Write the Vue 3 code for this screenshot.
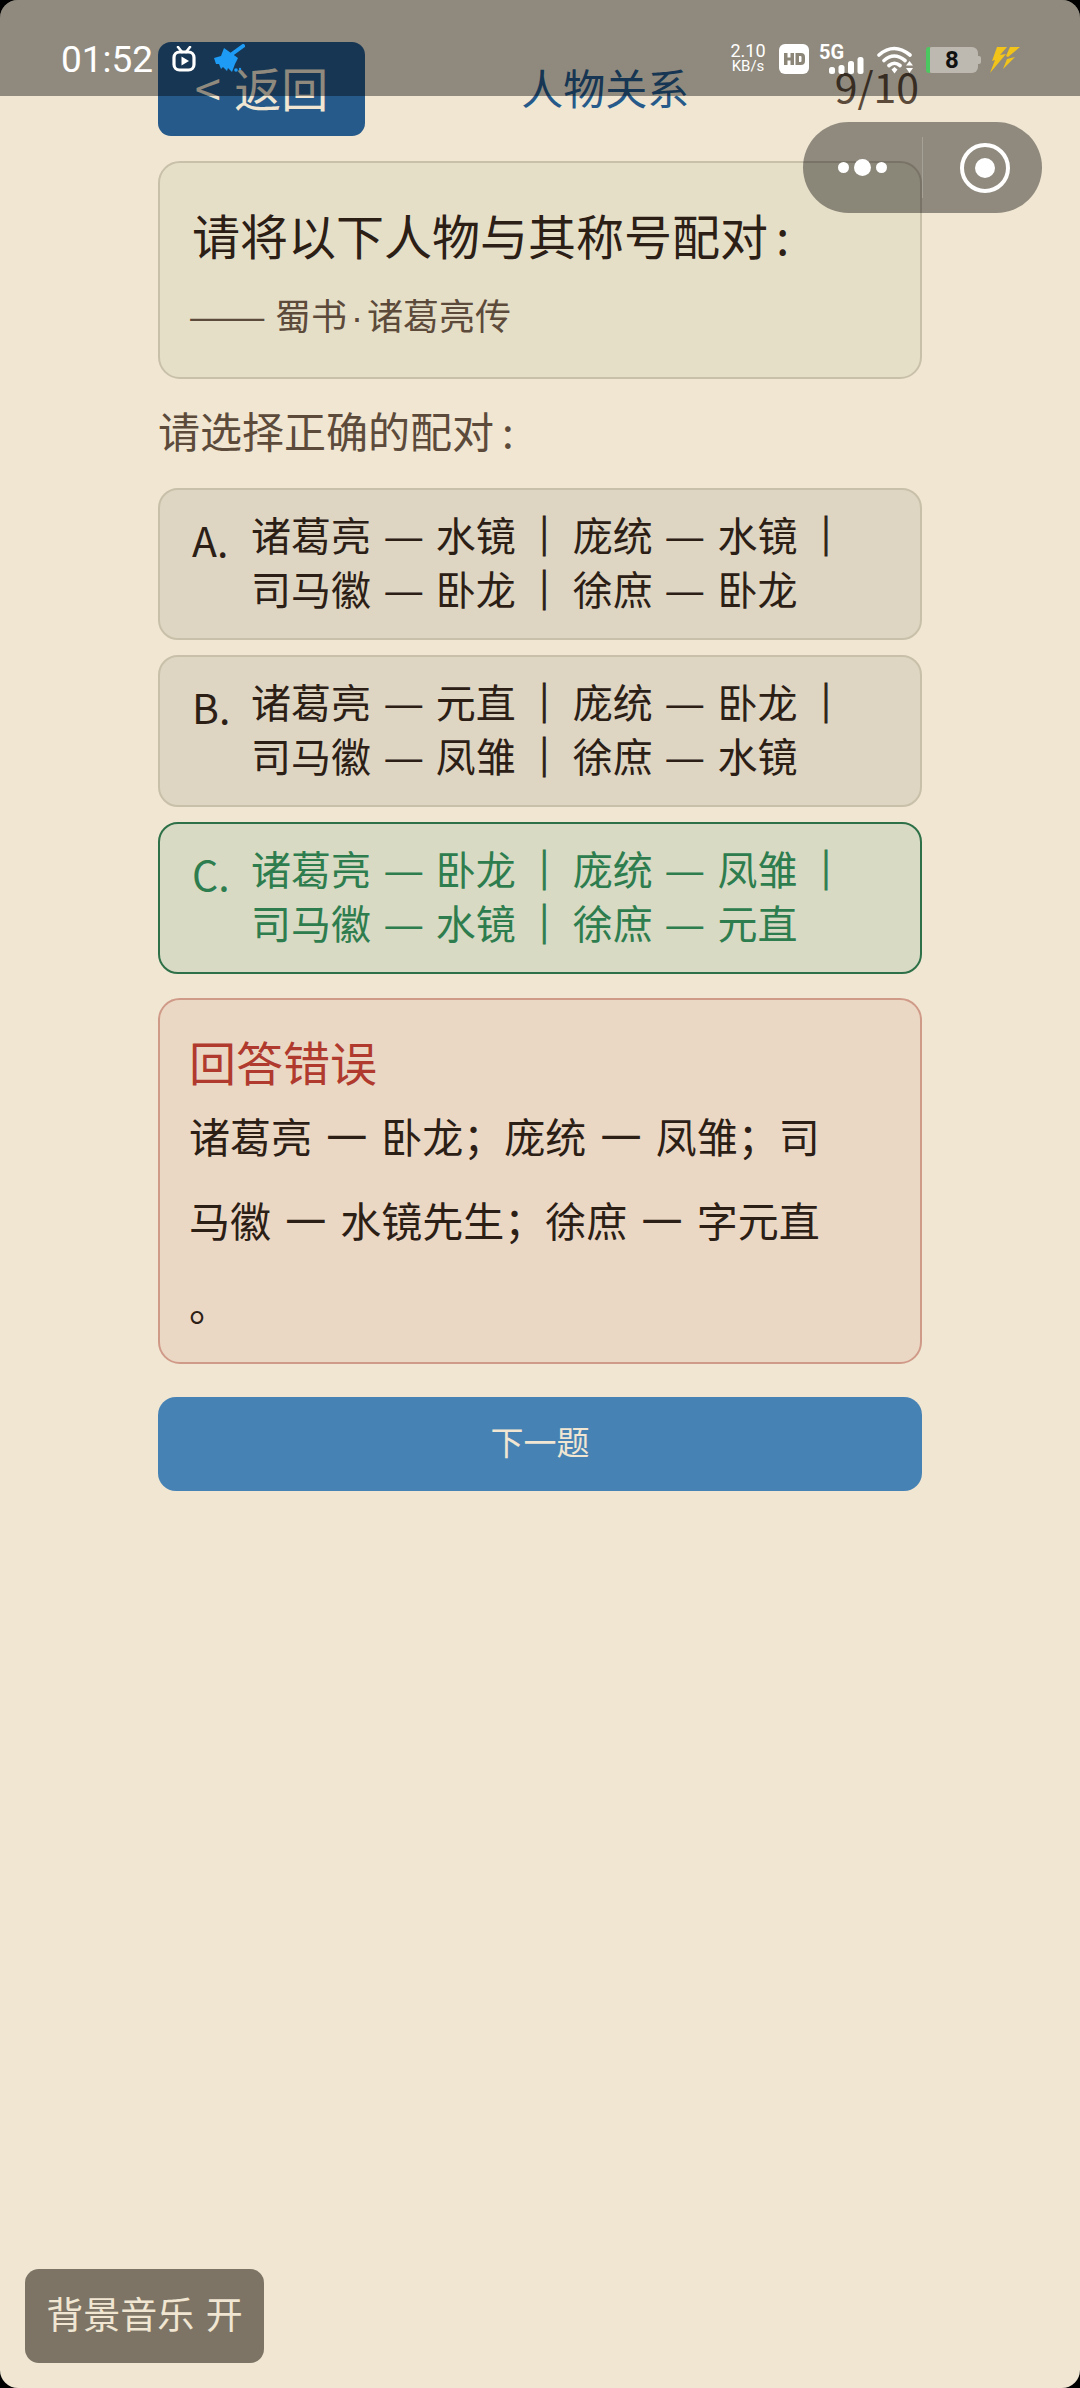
<template>
  <div class="screen">
    <main class="quiz">
      <header class="quiz-header">
        <button class="btn-back">&lt; 返回</button>
        <h1 class="quiz-title">人物关系</h1>
        <span class="quiz-progress">9/10</span>
      </header>

      <section class="question-card">
        <p class="question-text">请将以下人物与其称号配对<span class="colon">:</span></p>
        <p class="question-source"><span class="long-dash">——</span> 蜀书<span class="mid-dot">·</span>诸葛亮传</p>
      </section>

      <p class="prompt">请选择正确的配对<span class="colon">:</span></p>

      <div class="options">
        <div v-for="opt in options" :key="opt.label" :class="['option', { correct: opt.correct }]">
          <span class="option-label">{{ opt.label }}.</span>
          <span class="option-text">
            <span v-for="(line, i) in opt.lines" :key="i" class="option-line">
              <template v-for="(pair, j) in line" :key="j">
                <span class="pair-name">{{ pair[0] }}</span>
                <span class="dash">—</span>
                <span class="pair-title">{{ pair[1] }}</span>
                <b v-if="j < line.length - 1 || i === 0" class="pipe">｜</b>
              </template>
            </span>
          </span>
        </div>
      </div>

      <section class="feedback">
        <h2 class="feedback-title">回答错误</h2>
        <p class="feedback-line">诸葛亮 一 卧龙；庞统 一 凤雏；司</p>
        <p class="feedback-line">马徽 一 水镜先生；徐庶 一 字元直</p>
        <p class="feedback-line">。</p>
      </section>

      <button class="btn-next">下一题</button>
    </main>

    <button class="btn-music">背景音乐 开</button>

    <!-- system status bar, drawn over the page -->
    <div class="status-bar">
      <div class="status-left">
        <span class="clock">01:52</span>
        <svg class="icon-tv" width="24" height="26" viewBox="0 0 24 26">
          <path d="M6 1l4 5M18 1l-4 5" stroke="#fff" stroke-width="2.6" stroke-linecap="round" fill="none" />
          <rect x="2" y="6" width="20" height="18" rx="5.5" fill="none" stroke="#fff" stroke-width="3.2" />
          <path d="M9.5 10.5v9l7.5-4.500z" fill="#fff" />
        </svg>
        <svg class="icon-broom" width="32" height="30" viewBox="0 0 32 30">
          <path d="M30 2L19 10" stroke="#1e9bf5" stroke-width="4" stroke-linecap="round" />
          <path d="M1 14L8 12L11 4L25 14L22 20L19 28L15 24L14 27L10 23L8 25L6 20L3 20z" fill="#1e9bf5" />
          <circle cx="23" cy="26" r="1.800" fill="#1e9bf5" />
          <circle cx="27" cy="25" r="1.200" fill="#1e9bf5" />
        </svg>
      </div>
      <div class="status-right">
        <div class="net-speed"><span>2.10</span><span class="net-unit">KB/s</span></div>
        <svg class="icon-hd" width="30" height="30" viewBox="0 0 30 30">
          <rect width="30" height="30" rx="6" fill="#fff" />
          <path d="M5 9h3.500v4.500h3V9H15v12h-3.500v-4.500h-3V21H5zM16.500 9H22q4 0 4 4v4q0 4-4 4h-5.500zM20 12v6h1.500q1 0 1-1v-4q0-1-1-1z" fill="#8c8678" />
        </svg>
        <div class="signal">
          <span class="signal-type">5G</span>
          <svg class="signal-bars" width="35" height="17" viewBox="0 0 35 17">
            <rect x="0" y="10" width="6" height="7" rx="2.500" fill="#fff" />
            <rect x="9.500" y="8" width="6" height="9" rx="2.500" fill="#fff" />
            <rect x="19" y="4" width="6" height="13" rx="2.500" fill="#fff" />
            <rect x="28.500" y="0" width="6" height="17" rx="2.500" fill="#fff" />
          </svg>
        </div>
        <svg class="icon-wifi" width="38" height="30" viewBox="0 0 38 30">
          <path d="M2 10q15-13 31 0M7 15.500q10-9 21 0M12 20.500q5.500-4.500 11 0" stroke="#fff" stroke-width="3.600" fill="none" stroke-linecap="round" />
          <path d="M14.500 24.500l3-2.500 3 2.500-3 4z" fill="#fff" />
          <path d="M32.500 16l3.500 4.500h-7zM29 23h7l-3.500 5z" fill="#fff" />
        </svg>
        <div class="battery">
          <span class="battery-level"></span>
          <span class="battery-num">8</span>
          <span class="battery-cap"></span>
        </div>
        <svg class="icon-bolt" width="31" height="27" viewBox="0 0 31 27">
          <path d="M8 1h10l-7 8 6-1L1 27l5-13-3 1zM21 1h10L19 11l-2-1z M18 13l8-2-12 12z" fill="#f2c318" />
        </svg>
      </div>
    </div>

    <!-- mini program capsule -->
    <div class="capsule">
      <div class="capsule-more">
        <i class="dot"></i><i class="dot big"></i><i class="dot"></i>
      </div>
      <span class="capsule-divider"></span>
      <div class="capsule-close"><i class="close-inner"></i></div>
    </div>
  </div>
</template>

<script setup>
const options = [
  { label: 'A', lines: [[['诸葛亮', '水镜'], ['庞统', '水镜']], [['司马徽', '卧龙'], ['徐庶', '卧龙']]] },
  { label: 'B', lines: [[['诸葛亮', '元直'], ['庞统', '卧龙']], [['司马徽', '凤雏'], ['徐庶', '水镜']]] },
  { label: 'C', lines: [[['诸葛亮', '卧龙'], ['庞统', '凤雏']], [['司马徽', '水镜'], ['徐庶', '元直']]], correct: true },
];
</script>

<style>
html, body { background: #000; }
</style>

<style scoped>
.screen { position: relative; height: 2388px; overflow: hidden; border-radius: 18px; background: #f0e6d2; color: #2c2016; font-family: "Noto Sans CJK SC", "Noto Sans", sans-serif; }
.quiz { width: 764px; margin: 0 auto; padding-top: 42px; }
p, h1, h2 { margin: 0; font-weight: 400; }
button { font-family: inherit; border: none; cursor: pointer; }

.quiz-header { display: flex; align-items: center; justify-content: space-between; height: 94px; }
.btn-back { width: 207px; height: 94px; border-radius: 13px; background: #265a8a; color: #f0e6d2; font-size: 47px; padding: 0 0 6px; word-spacing: 3px; }
.quiz-title { font-size: 42px; color: #265a8a; margin-left: 11px; padding-bottom: 6px; }
.quiz-progress { font-size: 41px; color: #5c4a3a; margin-right: 3px; padding-bottom: 8px; }

.question-card { margin-top: 25px; height: 218px; box-sizing: border-box; padding: 37px 32px 0; border: 2px solid #c9c0aa; border-radius: 22px; background: #e6dfc8; }
.question-text { font-size: 48px; line-height: 68px; white-space: nowrap; }
.colon { margin-left: 8px; }
.question-source { margin-top: 21px; margin-left: -4px; font-size: 36px; line-height: 50px; color: #5c4a3a; }
.long-dash { display: inline-block; width: 74px; transform: scaleX(1.3); transform-origin: left center; margin-right: 5px; }
.mid-dot { font-family: "Liberation Sans", sans-serif; margin: 0 4px; }
.prompt { margin-top: 26px; font-size: 42px; line-height: 50px; color: #5c4a3a; }

.options { margin-top: 33px; display: flex; flex-direction: column; gap: 15px; }
.option { display: flex; align-items: flex-start; height: 152px; box-sizing: border-box; padding: 17px 32px; border: 2px solid #c9c0aa; border-radius: 20px; background: #ded6c2; font-size: 40px; line-height: 54px; }
.option.correct { border-color: #2e7048; background: #d8dac4; color: #2e7d4e; }
.option-label { width: 59px; flex-shrink: 0; font-size: 41px; margin-top: 5px; }
.option-text { display: flex; flex-direction: column; }
.option-line { white-space: nowrap; }
.dash { display: inline-block; transform: scaleX(1.15); margin: 0 14.5px; }
.pipe { font-weight: 700; margin: 0 8.5px; -webkit-text-stroke: 1px currentColor; }

.feedback { margin-top: 24px; height: 366px; box-sizing: border-box; padding: 28px 29px 0; border: 2px solid #d09a88; border-radius: 22px; background: #ebd8c4; }
.feedback-title { font-size: 47px; line-height: 65px; color: #b03a2e; }
.feedback-line { font-size: 41px; line-height: 84px; white-space: nowrap; word-spacing: 5px; }

.btn-next { display: block; width: 100%; height: 94px; margin-top: 33px; border-radius: 18px; background: #4682b4; color: #f0e6d2; font-size: 33px; padding: 0 0 6px; }

.btn-music { position: absolute; left: 25px; top: 2269px; width: 239px; height: 94px; border-radius: 14px; background: #7d7466; color: #f0e6d2; font-size: 37px; padding: 0 0 6px; word-spacing: 3px; }

.status-bar { position: absolute; left: 0; right: 0; top: 0; height: 96px; background: rgba(0, 0, 0, 0.4); display: flex; justify-content: space-between; padding: 42px 60px 0 61px; box-sizing: border-box; color: #fff; }
.status-left, .status-right { display: flex; align-items: flex-start; }
.clock { font-family: Roboto, sans-serif; font-size: 37px; line-height: 36px; }
.icon-tv { margin: 4px 0 0 19px; }
.icon-broom { margin: 2px 0 0 17px; }
.net-speed { display: flex; flex-direction: column; align-items: center; margin-top: 1px; font-family: Roboto, sans-serif; font-size: 18px; line-height: 16px; width: 38px; }
.net-unit { font-size: 15px; line-height: 14px; }
.icon-hd { margin: 2px 0 0 12px; }
.signal { position: relative; width: 46px; height: 32px; margin-left: 10px; }
.signal-type { position: absolute; left: 0; top: 2px; font-family: Roboto, sans-serif; font-weight: 700; font-size: 20px; line-height: 16px; }
.signal-bars { position: absolute; left: 10px; top: 15px; }
.icon-wifi { margin: 3px 0 0 12px; }
.battery { position: relative; width: 52px; height: 26px; margin: 5px 0 0 11px; border-radius: 6px; background: #bdb9b0; display: flex; align-items: center; justify-content: center; }
.battery-level { position: absolute; left: 0; top: 0; bottom: 0; width: 4px; border-radius: 3px 0 0 3px; background: #4cc860; }
.battery-num { font-family: Roboto, sans-serif; font-weight: 700; font-size: 24px; color: #111; }
.battery-cap { position: absolute; right: -3px; top: 9px; width: 3px; height: 8px; border-radius: 0 2px 2px 0; background: #bdb9b0; }
.icon-bolt { margin: 4px 0 0 11px; }

.capsule { position: absolute; left: 803px; top: 122px; width: 239px; height: 91px; border-radius: 46px; background: rgba(0, 0, 0, 0.4); display: flex; align-items: center; }
.capsule-more { width: 119px; display: flex; align-items: center; justify-content: center; gap: 5px; }
.dot { width: 11px; height: 11px; border-radius: 50%; background: #fff; }
.dot.big { width: 17px; height: 17px; }
.capsule-divider { width: 1px; height: 61px; background: rgba(255, 255, 255, 0.2); }
.capsule-close { width: 50px; height: 50px; margin-left: 37px; box-sizing: border-box; border: 4px solid #fff; border-radius: 50%; display: flex; align-items: center; justify-content: center; }
.close-inner { width: 20px; height: 20px; border-radius: 50%; background: #fff; }
</style>
